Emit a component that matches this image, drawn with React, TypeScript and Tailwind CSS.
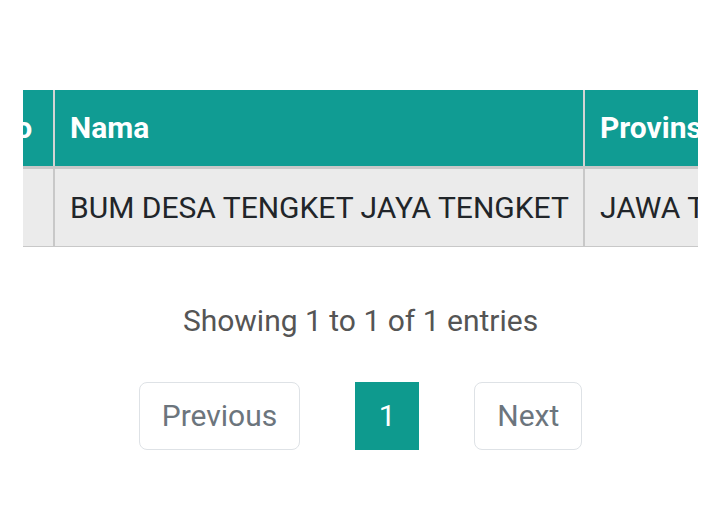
export default function App() {
  return (
    <div
      className="w-[720px] h-[518px] bg-white overflow-hidden"
      style={{ fontFamily: "Roboto, 'Noto Sans', sans-serif" }}
    >
      <div className="pt-[90px] pl-[23px] pr-[22px]">
        {/* Table (scrolled horizontally) */}
        <div className="overflow-hidden w-[675px]">
          <table className="-ml-[44px] table-fixed w-[960px] border-collapse text-[30px] whitespace-nowrap">
            <colgroup>
              <col className="w-[75px]" />
              <col className="w-[530px]" />
              <col className="w-[355px]" />
            </colgroup>
            <thead>
              <tr className="bg-[#109c93] text-white h-[77px]">
                <th className="border-r-2 border-[#d4d4d4] px-[15px] text-left font-bold">No</th>
                <th className="border-r-2 border-[#d4d4d4] px-[15px] text-left font-bold">Nama</th>
                <th className="px-[15px] text-left font-bold">Provinsi</th>
              </tr>
            </thead>
            <tbody>
              <tr className="bg-[#ebebeb] text-[#212529] h-[79px] border-t-[3px] border-b border-[#c8c8c8]">
                <td className="border-r-2 border-[#c8c8c8] px-[15px]">1</td>
                <td className="border-r-2 border-[#c8c8c8] px-[15px]">BUM DESA TENGKET JAYA TENGKET</td>
                <td className="px-[15px]">JAWA TIMUR</td>
              </tr>
            </tbody>
          </table>
        </div>

        {/* Info */}
        <div className="mt-[52px] text-center text-[30px] leading-[44px] text-[#555]">
          Showing 1 to 1 of 1 entries
        </div>

        {/* Pagination */}
        <div className="mt-[39px] flex justify-center items-center gap-[55px] text-[30px]">
          <button className="h-[68px] px-[22px] border border-[#dee2e6] rounded-[8px] text-[#6c757d] bg-white">
            Previous
          </button>
          <button className="h-[68px] w-[64px] bg-[#0e9a8e] text-white">1</button>
          <button className="h-[68px] px-[22px] border border-[#dee2e6] rounded-[8px] text-[#6c757d] bg-white">
            Next
          </button>
        </div>
      </div>
    </div>
  );
}
